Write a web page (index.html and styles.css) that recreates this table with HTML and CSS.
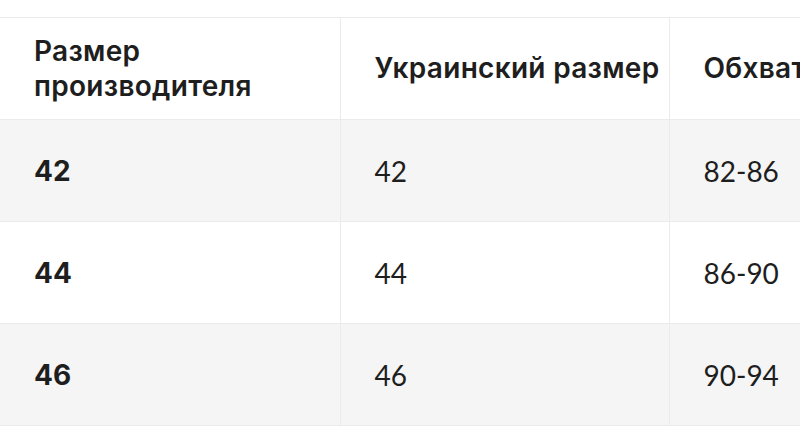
FILE: index.html
```html
<!DOCTYPE html>
<html lang="ru">
<head>
<meta charset="utf-8">
<link rel="stylesheet" href="styles.css">
</head>
<body>
<div class="wrap">
  <table class="sizes">
    <colgroup>
      <col class="c1"><col class="c2"><col class="c3">
    </colgroup>
    <thead>
      <tr>
        <th>Размер<br>производителя</th>
        <th>Украинский размер</th>
        <th>Обхват груди</th>
      </tr>
    </thead>
    <tbody>
      <tr class="alt"><td class="key">42</td><td>42</td><td>82-86</td></tr>
      <tr><td class="key">44</td><td>44</td><td>86-90</td></tr>
      <tr class="alt"><td class="key">46</td><td>46</td><td>90-94</td></tr>
    </tbody>
  </table>
</div>
</body>
</html>
```

FILE: styles.css
```css
html, body {
  margin: 0;
  padding: 0;
  background: #fff;
}
.wrap {
  width: 800px;
  height: 434px;
  overflow: hidden;
  padding-top: 17px;
  box-sizing: border-box;
}
.sizes {
  table-layout: fixed;
  width: 1000px;
  border-collapse: collapse;
  color: #1e1e1e;
}
.c1 { width: 340px; }
.c2 { width: 329px; }
.c3 { width: 331px; }
.sizes th,
.sizes td {
  border-top: 1px solid #ebebeb;
  border-bottom: 1px solid #ebebeb;
  border-left: 1px solid #ebebeb;
  padding: 0 0 0 34px;
  text-align: left;
  vertical-align: middle;
  white-space: nowrap;
}
.sizes th:first-child,
.sizes td:first-child {
  border-left: none;
}
.sizes th {
  height: 101px;
  font-family: "Inter", "Noto Sans", sans-serif;
  font-weight: 600;
  font-size: 28px;
  line-height: 35px;
  letter-spacing: 0.3px;
}
.sizes td {
  height: 101px;
  font-family: "Lato", "Liberation Sans", sans-serif;
  font-weight: 400;
  font-size: 28px;
}
.sizes td.key {
  font-family: "Inter", "Noto Sans", sans-serif;
  font-weight: 700;
  font-size: 28px;
}
.alt td {
  background: #f5f5f5;
}
```
